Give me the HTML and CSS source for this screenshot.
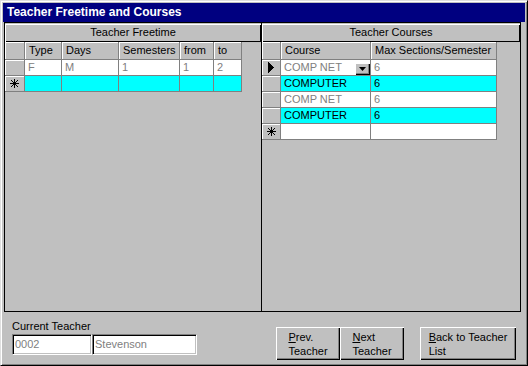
FILE: index.html
```html
<!DOCTYPE html>
<html>
<head>
<meta charset="utf-8">
<link rel="stylesheet" href="styles.css">
</head>
<body>
<div class="window">
  <div class="titlebar">Teacher Freetime and Courses</div>
  <div class="panels">
    <div class="panel panel-left">
      <div class="caption">Teacher Freetime</div>
      <div class="grid grid-free">
        <div class="sel"></div>
        <div class="hc">Type</div>
        <div class="hc">Days</div>
        <div class="hc">Semesters</div>
        <div class="hc">from</div>
        <div class="hc">to</div>

        <div class="sel"></div>
        <div class="cell">F</div>
        <div class="cell">M</div>
        <div class="cell">1</div>
        <div class="cell">1</div>
        <div class="cell">2</div>

        <div class="sel"><svg class="star" width="9" height="9" viewBox="0 0 9 9"><path d="M4.5 0V9M0 4.5H9M1 1L8 8M8 1L1 8" stroke="#000" stroke-width="1" fill="none"/></svg></div>
        <div class="cell cyan"></div>
        <div class="cell cyan"></div>
        <div class="cell cyan"></div>
        <div class="cell cyan"></div>
        <div class="cell cyan"></div>
      </div>
    </div>
    <div class="panel panel-right">
      <div class="caption">Teacher Courses</div>
      <div class="grid grid-courses">
        <div class="sel"></div>
        <div class="hc">Course</div>
        <div class="hc">Max Sections/Semester</div>

        <div class="sel"><svg width="6" height="11" viewBox="0 0 6 11"><polygon points="0,0 6,5.5 0,11" fill="#000"/></svg></div>
        <div class="cell combo"><span>COMP NET</span><span class="drop"><svg width="7" height="4" viewBox="0 0 7 4"><polygon points="0,0 7,0 3.5,4" fill="#000"/></svg></span></div>
        <div class="cell">6</div>

        <div class="sel"></div>
        <div class="cell cyan">COMPUTER</div>
        <div class="cell cyan">6</div>

        <div class="sel"></div>
        <div class="cell">COMP NET</div>
        <div class="cell">6</div>

        <div class="sel"></div>
        <div class="cell cyan">COMPUTER</div>
        <div class="cell cyan">6</div>

        <div class="sel"><svg class="star" width="9" height="9" viewBox="0 0 9 9"><path d="M4.5 0V9M0 4.5H9M1 1L8 8M8 1L1 8" stroke="#000" stroke-width="1" fill="none"/></svg></div>
        <div class="cell"></div>
        <div class="cell"></div>
      </div>
    </div>
  </div>
  <div class="footer">
    <div class="current">
      <div class="label">Current Teacher</div>
      <div class="fields">
        <div class="field field-id">0002</div>
        <div class="field field-name">Stevenson</div>
      </div>
    </div>
    <div class="navgroup">
      <button class="btn btn-nav"><span><u>P</u>rev.<br>Teacher</span></button>
      <button class="btn btn-nav"><span><u>N</u>ext<br>Teacher</span></button>
    </div>
    <button class="btn btn-back"><span><u>B</u>ack to Teacher<br>List</span></button>
  </div>
</div>
</body>
</html>
```
FILE: styles.css
```css
* { box-sizing: border-box; }
html, body { margin: 0; padding: 0; background: #c0c0c0; }
body {
  font-family: "Liberation Sans", Arial, sans-serif;
  font-size: 11px;
  color: #000;
}
.window {
  width: 528px;
  height: 366px;
  background: #c0c0c0;
  border: 1px solid;
  border-color: #dfdfdf #000 #000 #dfdfdf;
  box-shadow: inset 1px 1px #fff, inset -1px -1px #808080;
  padding: 2px;
  display: flex;
  flex-direction: column;
}
.titlebar {
  height: 19px;
  background: #000080;
  color: #fff;
  font-weight: bold;
  font-size: 12px;
  line-height: 19px;
  padding-left: 4px;
  white-space: nowrap;
}
.panels {
  display: flex;
  margin-left: 1px;
  height: 290px;
}
.panel {
  border: 1px solid #000;
  padding-top: 1px;
  height: 290px;
}
.panel-left { width: 258px; }
.panel-right { width: 259px; border-left: none; }
.caption {
  height: 18px;
  line-height: 17px;
  text-align: center;
  background: #c0c0c0;
  box-shadow: inset 1px 1px #fff, inset -1px -1px #000;
}
.grid { display: grid; }
.grid-free {
  grid-template-columns: 20px 37px 57px 61px 34px 28px;
  grid-template-rows: 18px 16px 16px;
}
.grid-courses {
  grid-template-columns: 19px 90px 126px;
  grid-template-rows: 18px 16px 16px 16px 16px 16px;
}
.grid > div {
  border-right: 1px solid #808080;
  border-bottom: 1px solid #808080;
  white-space: nowrap;
  overflow: hidden;
}
.hc {
  background: #c0c0c0;
  box-shadow: inset 1px 1px #fff;
  line-height: 17px;
  padding-left: 4px;
}
.sel {
  background: #c0c0c0;
  box-shadow: inset 1px 1px #fff;
  display: flex;
  align-items: center;
  justify-content: center;
}
.sel svg { display: block; shape-rendering: crispEdges; }
.cell {
  background: #fff;
  color: #808080;
  line-height: 15px;
  padding-left: 3px;
}
.cell.cyan { background: #00ffff; color: #000; }
.combo {
  display: flex;
  justify-content: space-between;
  align-items: flex-start;
}
.drop {
  width: 15px;
  height: 12px;
  margin-top: 3px;
  background: #c0c0c0;
  box-shadow: inset 1px 1px #fff, inset -1px -1px #000, inset -2px -2px #808080;
  display: flex;
  align-items: center;
  justify-content: center;
}
.drop svg { display: block; }
.footer {
  display: flex;
  align-items: flex-start;
  padding-left: 9px;
}
.current { margin-top: 8px; }
.label { line-height: 13px; }
.fields { display: flex; margin-top: 1px; }
.field {
  height: 21px;
  background: #fff;
  color: #808080;
  border-top: 1px solid #808080;
  border-left: 1px solid #808080;
  box-shadow: inset 1px 1px #000, inset -1px -1px #c0c0c0;
  border-right: 1px solid #fff;
  border-bottom: 1px solid #fff;
  line-height: 18px;
  padding-left: 2px;
}
.field-id { width: 80px; }
.field-name { width: 105px; }
.navgroup { display: flex; margin-left: 79px; margin-top: 15px; }
.btn {
  font: inherit;
  color: #000;
  height: 33px;
  background: #c0c0c0;
  border: none;
  padding: 0;
  box-shadow: inset 1px 1px #fff, inset -1px -1px #000, inset -2px -2px #808080;
  display: flex;
  align-items: center;
  justify-content: center;
  line-height: 14px;
}
.btn span { display: inline-block; text-align: left; }
.btn-nav { width: 64px; }
.btn-back { width: 96px; margin-left: 16px; margin-top: 15px; }
```
